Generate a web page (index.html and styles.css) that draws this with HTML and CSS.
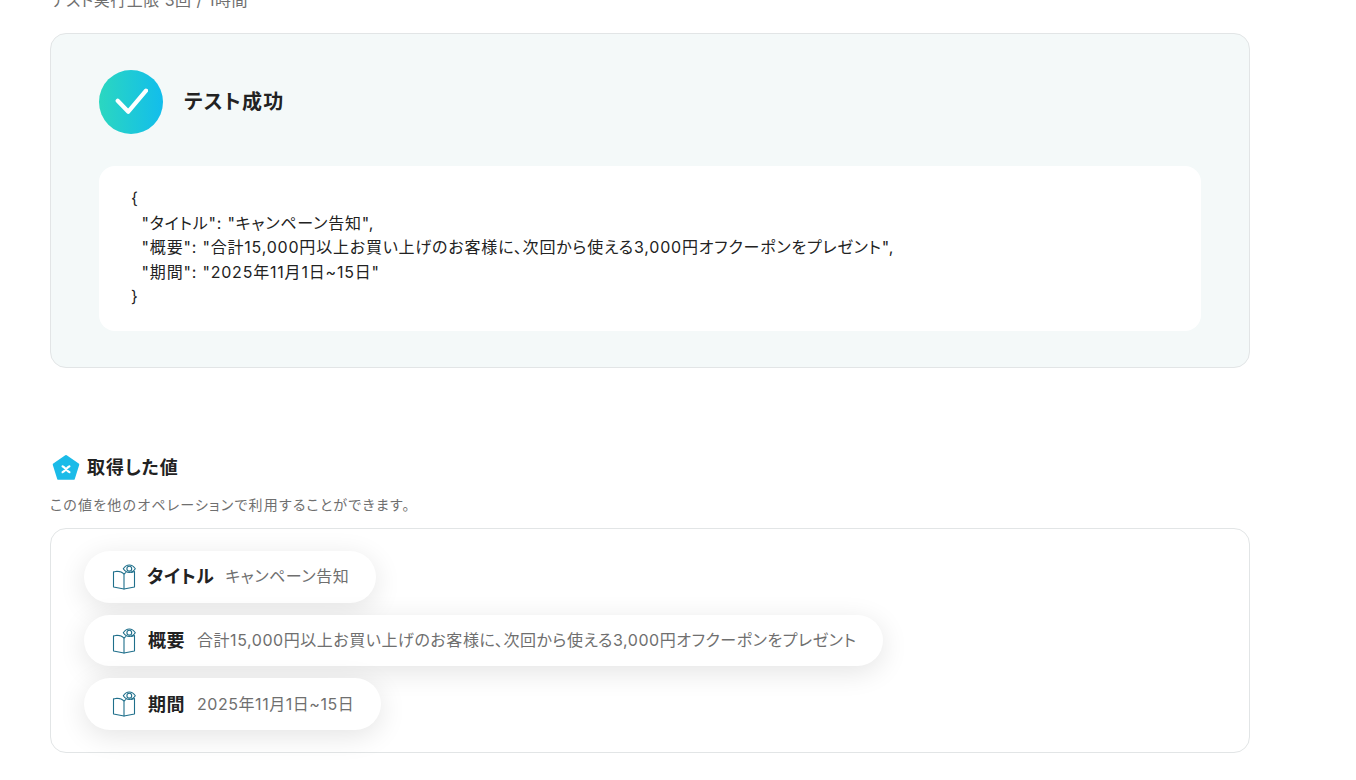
FILE: index.html
```html
<!DOCTYPE html>
<html lang="ja">
<head>
<meta charset="utf-8">
<title>テスト成功</title>
<link rel="stylesheet" href="styles.css">
</head>
<body>
<main class="page">
  <p class="limit">テスト実行上限 3回 / 1時間</p>
  <section class="result-card">
    <div class="result-head">
      <span class="check">
        <svg width="34" height="28" viewBox="0 0 34 28"><path d="M3.7 12.7 L14.3 23.7 L32 2.7" fill="none" stroke="#fff" stroke-width="4.2" stroke-linecap="round" stroke-linejoin="round"/></svg>
      </span>
      <h2 class="result-title">テスト成功</h2>
    </div>
    <pre class="code">{
  "タイトル": "キャンペーン告知",
  "概要": "合計15,000円以上お買い上げのお客様に、次回から使える3,000円オフクーポンをプレゼント",
  "期間": "2025年11月1日~15日"
}</pre>
  </section>
  <div class="values-head">
    <svg class="pentagon" width="28" height="28" viewBox="0 0 28 28">
      <path d="M14 2.2 L26 10.6 L21.6 24.6 L6.4 24.6 L2 10.6 Z" fill="#1bbbe8" stroke="#1bbbe8" stroke-width="2.5" stroke-linejoin="round"/>
      <path d="M10.6 12.4 C12.8 12.8 15.2 17.8 17.4 18.2 M17.4 12.4 C15.2 12.8 12.8 17.8 10.6 18.2" fill="none" stroke="#fff" stroke-width="2.2" stroke-linecap="round"/>
    </svg>
    <h3 class="values-title">取得した値</h3>
  </div>
  <p class="values-note">この値を他のオペレーションで利用することができます。</p>
  <section class="values-card">
    <div class="pill">
      <svg class="book" width="24" height="26" viewBox="0 0 24 26"><use href="#book"/></svg>
      <span class="pill-label kana">タイトル</span>
      <span class="pill-value">キャンペーン告知</span>
    </div>
    <div class="pill">
      <svg class="book" width="24" height="26" viewBox="0 0 24 26"><use href="#book"/></svg>
      <span class="pill-label">概要</span>
      <span class="pill-value">合計15,000円以上お買い上げのお客様に、次回から使える3,000円オフクーポンをプレゼント</span>
    </div>
    <div class="pill">
      <svg class="book" width="24" height="26" viewBox="0 0 24 26"><use href="#book"/></svg>
      <span class="pill-label">期間</span>
      <span class="pill-value">2025年11月1日~15日</span>
    </div>
  </section>
</main>
<svg class="defs" width="0" height="0">
  <defs>
    <g id="book" fill="none" stroke="#1f6f8b" stroke-width="1.1" stroke-linejoin="round" stroke-linecap="round">
      <path d="M1.5 8 V23 L12 25 L22.5 23 V7.5 L19.5 8.4"/>
      <path d="M1.5 8 L5 7.2 C8 7.2 10.5 8.2 12 10 V25"/>
      <path d="M12 10 C12.6 9.4 13.2 9 13.8 8.6"/>
      <path d="M11.3 4.7 C13 2.2 15.2 1 17.3 1 C19.4 1 21.6 2.2 23.3 4.7 C21.6 7.2 19.4 8.4 17.3 8.4 C15.2 8.4 13 7.2 11.3 4.7 Z"/>
      <circle cx="17.3" cy="4.7" r="2.4"/>
    </g>
  </defs>
</svg>
</body>
</html>
```
FILE: styles.css
```css
* { box-sizing: border-box; }
html, body { margin: 0; padding: 0; background: #fff; overflow: hidden; height: 100%; }
body {
  font-family: Inter, "Noto Sans CJK JP", sans-serif;
  font-feature-settings: "palt";
  letter-spacing: .5px;
  color: #222;
}
.page { width: 1200px; margin-left: 50px; margin-top: -12px; }
.limit { margin: 0 0 21px; height: 24px; line-height: 24px; font-size: 16px; color: #6f6f6f; padding-left: 1px; }
.result-card {
  background: #f4f9f9;
  border: 1px solid #e2e5e6;
  border-radius: 16px;
  padding: 36px 48px;
  height: 335px;
}
.result-head { display: flex; align-items: center; gap: 21px; margin-bottom: 32px; }
.check {
  width: 64px; height: 64px; border-radius: 50%;
  background: linear-gradient(90deg, #2bd7c0 0%, #12bdec 100%);
  display: flex; align-items: center; justify-content: center;
}
.result-title { margin: -4px 0 0; font-size: 20px; font-weight: 700; letter-spacing: 1.3px; color: #222; }
.code {
  margin: 0;
  background: #fff;
  border-radius: 16px;
  padding: 20px 32px 0;
  height: 165px;
  font-family: inherit;
  font-size: 16px;
  letter-spacing: .8px;
  line-height: 24.5px;
  color: #222;
}
.values-head { display: flex; align-items: center; gap: 7px; margin: 84px 0 0 2px; height: 30px; }
.pentagon { margin-top: 2px; }
.values-title { margin: -2px 0 0; font-size: 18px; font-weight: 700; letter-spacing: .9px; color: #222; }
.values-note { margin: 13px 0 13px; font-size: 14px; line-height: 20px; letter-spacing: 1.2px; color: #6f6f6f; }
.values-card {
  border: 1px solid #e2e5e6;
  border-radius: 16px;
  height: 225px;
  padding: 22px 33px;
  display: flex; flex-direction: column; align-items: flex-start; gap: 12px;
}
.pill {
  height: 52px;
  display: flex; align-items: center;
  padding: 0 27px 0 28px;
  background: #fff;
  border-radius: 26px;
  box-shadow: 0 6px 28px rgba(0,0,0,.11);
}
.book { margin-right: 12px; flex: none; }
.pill-label { margin: -3px 12px 0 0; font-size: 18px; font-weight: 700; color: #222; }
.pill-label.kana { margin-left: -1px; margin-right: 11px; }
.pill-value { margin-top: -3px; font-size: 16px; letter-spacing: .55px; color: #6f6f6f; }
.defs { position: absolute; }
```
